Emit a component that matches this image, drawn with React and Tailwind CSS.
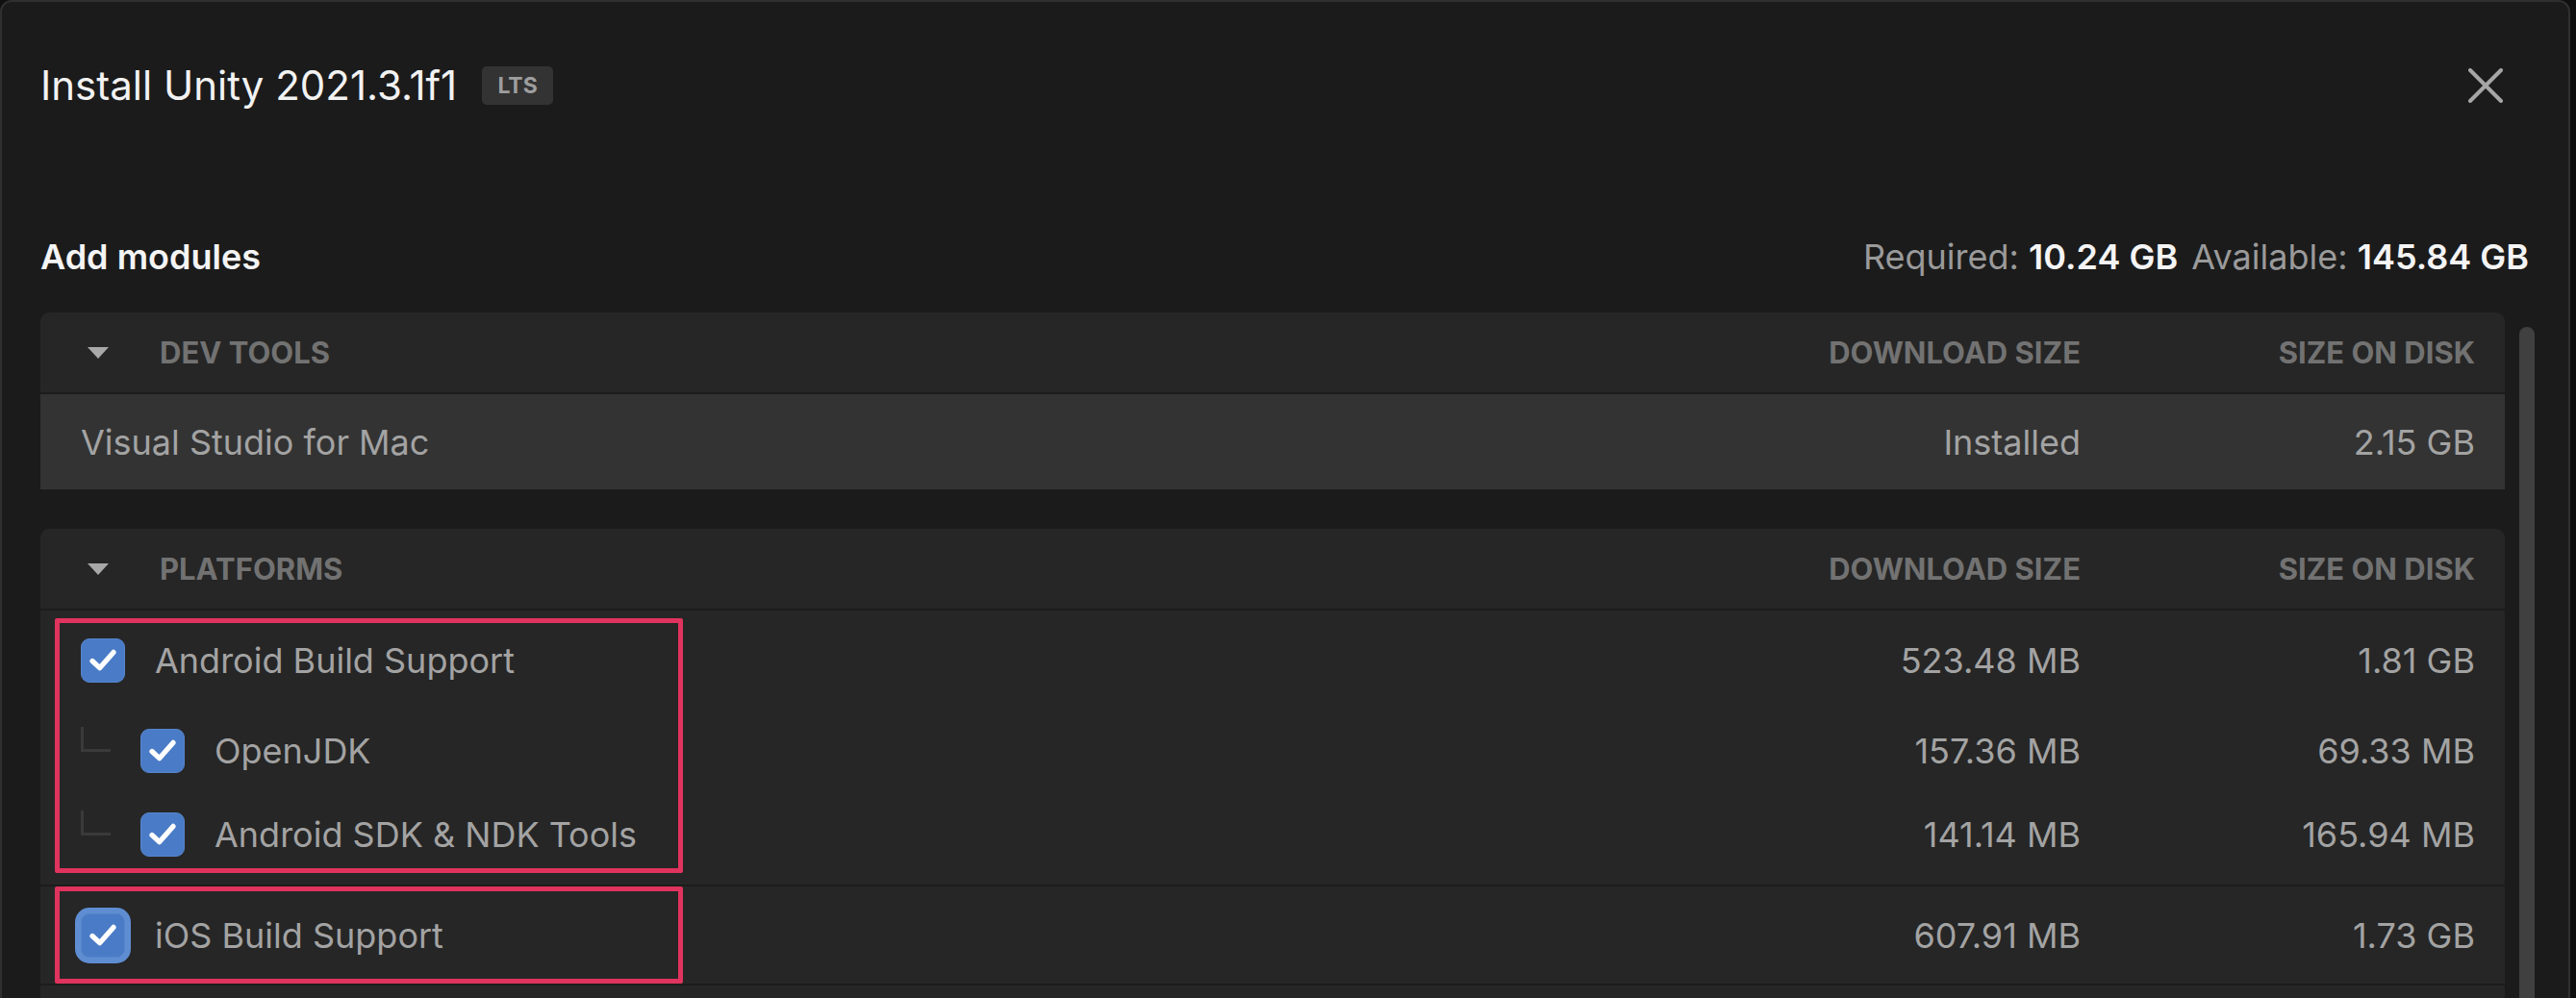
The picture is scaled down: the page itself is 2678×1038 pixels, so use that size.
import React from 'react';

// Annotated Unity Hub "Install Unity" module picker

const CheckBox = ({ focused }) => (
  <div
    className={`w-[46px] h-[46px] shrink-0 rounded-[9px] bg-[#4a7bc6] border border-[#5585cc] flex items-center justify-center ${
      focused ? 'ring-[6px] ring-[#5f8dd2]' : ''
    }`}
  >
    <svg width="46" height="46" viewBox="0 0 46 46" fill="none">
      <polyline
        points="11.5,23.5 19.5,31 34.5,14"
        stroke="#ffffff"
        strokeWidth="5.5"
        strokeLinecap="round"
        strokeLinejoin="round"
      />
    </svg>
  </div>
);

const TreeLine = () => (
  <div className="w-[31px] h-[26px] mb-[24px] mr-[31px] shrink-0 border-l-[3px] border-b-[3px] border-[#3a3a3a]" />
);

const SectionHeader = ({ title }) => (
  <div className="h-[83px] flex items-center pl-[49px] pr-[31px] bg-[#262626] text-[31px] font-bold leading-none text-[#727272]">
    <svg width="22" height="12" viewBox="0 0 22 12" className="mr-[53px] shrink-0">
      <polygon points="0,0 22,0 11,12" fill="#a8a8a8" />
    </svg>
    <div className="flex-1">{title}</div>
    <div className="w-[400px] text-right">DOWNLOAD SIZE</div>
    <div className="w-[410px] text-right">SIZE ON DISK</div>
  </div>
);

const Row = ({ children, download, disk, className = '' }) => (
  <div className={`flex items-center pl-[42px] pr-[31px] text-[36px] leading-none text-[#a3a3a3] ${className}`}>
    <div className="flex flex-1 items-center">{children}</div>
    <div className="w-[400px] text-right">{download}</div>
    <div className="w-[410px] text-right">{disk}</div>
  </div>
);

export default function App() {
  return (
    <div className="w-[2678px] h-[1038px] overflow-hidden bg-[#0f0f0f] font-['Inter','Noto_Sans',sans-serif]">
      <div className="w-[2672px] h-[1090px] rounded-t-[12px] border-2 border-[#2f2f2f] bg-[#1b1b1b] flex flex-col pl-[40px] pr-[35px]">
        {/* title bar */}
        <div className="h-[174px] shrink-0 flex items-center justify-between">
          <div className="flex items-center">
            <span className="text-[42px] leading-none text-[#f2f2f2]">Install Unity 2021.3.1f1</span>
            <span className="ml-[26px] w-[74px] h-[40px] rounded-[5px] bg-[#333333] flex items-center justify-center text-[23px] font-bold leading-none text-[#9e9e9e]">
              LTS
            </span>
          </div>
          <svg width="36" height="36" viewBox="0 0 36 36" className="mr-[33px]">
            <path d="M2 2 L34 34 M34 2 L2 34" stroke="#a6a6a6" strokeWidth="4" strokeLinecap="round" />
          </svg>
        </div>

        {/* sub header */}
        <div className="h-[149px] shrink-0 flex items-end justify-between pb-[40px] pr-[6px]">
          <span className="text-[36px] font-semibold leading-none text-[#f4f4f4]">Add modules</span>
          <span className="text-[36px] leading-none text-[#9a9a9a]">
            Required: <span className="font-semibold text-[#f4f4f4]">10.24 GB</span>
            <span className="ml-[14px]">Available: </span>
            <span className="font-semibold text-[#f4f4f4]">145.84 GB</span>
          </span>
        </div>

        {/* module list */}
        <div className="flex flex-1">
          <div className="flex-1 flex flex-col">
            <div className="rounded-t-[9px] overflow-hidden">
              <SectionHeader title="DEV TOOLS" />
              <div className="h-[2px] bg-[#1c1c1c]" />
              <Row download="Installed" disk="2.15 GB" className="h-[99px] bg-[#333333]">
                Visual Studio for Mac
              </Row>
            </div>

            <div className="relative mt-[41px] rounded-t-[9px] overflow-hidden">
              <SectionHeader title="PLATFORMS" />
              <div className="h-[2px] bg-[#1c1c1c]" />
              <div className="bg-[#262626] pt-[2px] pb-[9px]">
                <Row download="523.48 MB" disk="1.81 GB" className="h-[100px]">
                  <CheckBox />
                  <span className="ml-[31px]">Android Build Support</span>
                </Row>
                <Row download="157.36 MB" disk="69.33 MB" className="h-[87px]">
                  <TreeLine />
                  <CheckBox />
                  <span className="ml-[31px]">OpenJDK</span>
                </Row>
                <Row download="141.14 MB" disk="165.94 MB" className="h-[87px]">
                  <TreeLine />
                  <CheckBox />
                  <span className="ml-[31px]">Android SDK &amp; NDK Tools</span>
                </Row>
              </div>
              <div className="h-[2px] bg-[#1c1c1c]" />
              <Row download="607.91 MB" disk="1.73 GB" className="h-[101px] bg-[#262626]">
                <CheckBox focused />
                <span className="ml-[31px]">iOS Build Support</span>
              </Row>
              <div className="h-[2px] bg-[#1c1c1c]" />
              <div className="h-[80px] bg-[#262626]" />

              {/* annotation boxes */}
              <div className="absolute left-[15px] top-[93px] w-[653px] h-[265px] border-[5px] border-[#e0335e] rounded-[2px]" />
              <div className="absolute left-[15px] top-[372px] w-[653px] h-[101px] border-[5px] border-[#e0335e] rounded-[2px]" />
            </div>
          </div>

          {/* scrollbar */}
          <div className="ml-[15px] mt-[15px] w-[16px] rounded-t-full bg-[#404040]" />
        </div>
      </div>
    </div>
  );
}
